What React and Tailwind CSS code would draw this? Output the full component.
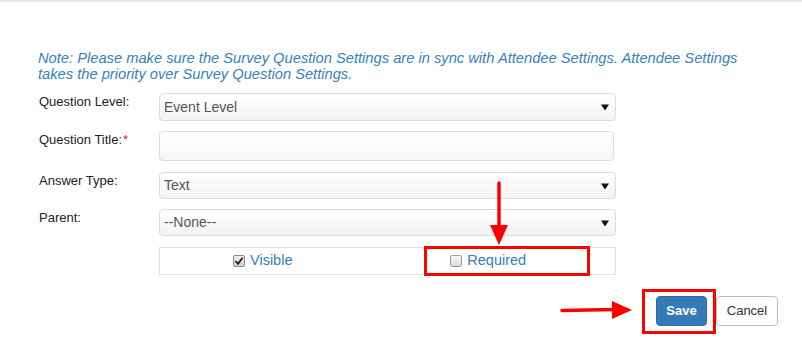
import React from 'react';

const selectBox =
  'flex items-center justify-between h-full w-full rounded-[4px] border border-[#dcdcdc] bg-gradient-to-b from-white to-[#f3f3f3] pl-[4px] pr-[6px] text-[14px] text-[#555]';

function Caret() {
  return (
    <svg width="8" height="7" viewBox="0 0 8 7" className="mt-[1px]">
      <path d="M0 0.5H8L4 6.5Z" fill="#111" />
    </svg>
  );
}

function SelectField({ value }) {
  return (
    <div className={selectBox}>
      <span>{value}</span>
      <Caret />
    </div>
  );
}

function Row({ label, required, height, children, mb }) {
  return (
    <div className={`flex ${mb}`}>
      <div className="w-[120px] pt-[1px] text-[13px] leading-[15px] text-[#222]">
        {label}
        {required && <span className="text-[#e02020] ml-[1px]">*</span>}
      </div>
      <div className={height}>{children}</div>
    </div>
  );
}

function Check({ checked, label }) {
  return (
    <label className="flex items-center gap-[5px] text-[14.5px] text-[#3a7cc0]">
      {checked ? (
        <span className="flex items-center justify-center w-[12px] h-[12px] rounded-[2px] border border-[#8a8a8a] bg-gradient-to-b from-[#eee] to-[#cfcfcf]">
          <svg width="10" height="10" viewBox="0 0 10 10">
            <path d="M1.5 5.2L4 7.8L8.6 1.8" stroke="#222" strokeWidth="1.8" fill="none" />
          </svg>
        </span>
      ) : (
        <span className="w-[12px] h-[12px] rounded-[2px] border border-[#9a9a9a] bg-gradient-to-b from-[#f6f6f6] to-[#dcdcdc]" />
      )}
      {label}
    </label>
  );
}

export default function App() {
  return (
    <div className="relative w-[802px] h-[339px] bg-white border-t-2 border-[#e8e8e8] font-['Liberation_Sans',Arial,sans-serif] overflow-hidden">
      <div className="pt-[48px] pl-[38px] h-[91px]">
        <p className="whitespace-nowrap italic text-[14.7px] leading-[16px] text-[#3681c3]">
          Note: Please make sure the Survey Question Settings are in sync with Attendee Settings. Attendee Settings
          <br />
          takes the priority over Survey Question Settings.
        </p>
      </div>

      <div className="pl-[39px]">
        <Row label="Question Level:" height="h-[28px] w-[457px]" mb="mb-[10px]">
          <SelectField value="Event Level" />
        </Row>
        <Row label="Question Title:" required height="h-[30px] w-[455px]" mb="mb-[11px]">
          <div className="h-full w-full rounded-[4px] border border-[#dcdcdc] bg-gradient-to-b from-white to-[#f6f6f6]" />
        </Row>
        <Row label="Answer Type:" height="h-[27px] w-[457px]" mb="mb-[10px]">
          <SelectField value="Text" />
        </Row>
        <Row label="Parent:" height="h-[27px] w-[457px]" mb="mb-[11px]">
          <SelectField value="--None--" />
        </Row>
        <div className="flex">
          <div className="w-[120px]" />
          <div className="grid grid-cols-2 h-[28px] w-[457px] border border-[#e2e2e2]">
            <div className="flex items-center justify-center pr-[22px]">
              <Check checked label="Visible" />
            </div>
            <div className="flex items-center justify-center pr-[26px]">
              <Check label="Required" />
            </div>
          </div>
        </div>

        <div className="flex justify-end gap-[9px] pr-[24px] mt-[21px]">
          <button className="h-[30px] w-[51px] rounded-[4px] bg-[#337ab7] border border-[#2e6da4] text-white font-bold text-[13px]">
            Save
          </button>
          <button className="h-[30px] w-[62px] rounded-[4px] bg-white border border-[#bdbdbd] text-[#333] text-[13px]">
            Cancel
          </button>
        </div>
      </div>

      {/* red annotations */}
      <div className="absolute left-[424px] top-[244px] w-[166px] h-[30px] border-[3px] border-[#f00]" />
      <div className="absolute left-[642px] top-[287px] w-[74px] h-[45px] border-[3px] border-[#f00]" />
      <svg className="absolute left-[486px] top-[179px]" width="26" height="66" viewBox="0 0 26 66">
        <path d="M13 2V46" stroke="#f00" strokeWidth="3.5" strokeLinecap="round" />
        <path d="M4 44H22L13 64Z" fill="#f00" />
      </svg>
      <svg className="absolute left-[558px] top-[296px]" width="78" height="24" viewBox="0 0 78 24">
        <path d="M4 12.5L56 11.5" stroke="#f00" strokeWidth="3.5" strokeLinecap="round" />
        <path d="M54 3V21L74 12Z" fill="#f00" />
      </svg>
    </div>
  );
}
